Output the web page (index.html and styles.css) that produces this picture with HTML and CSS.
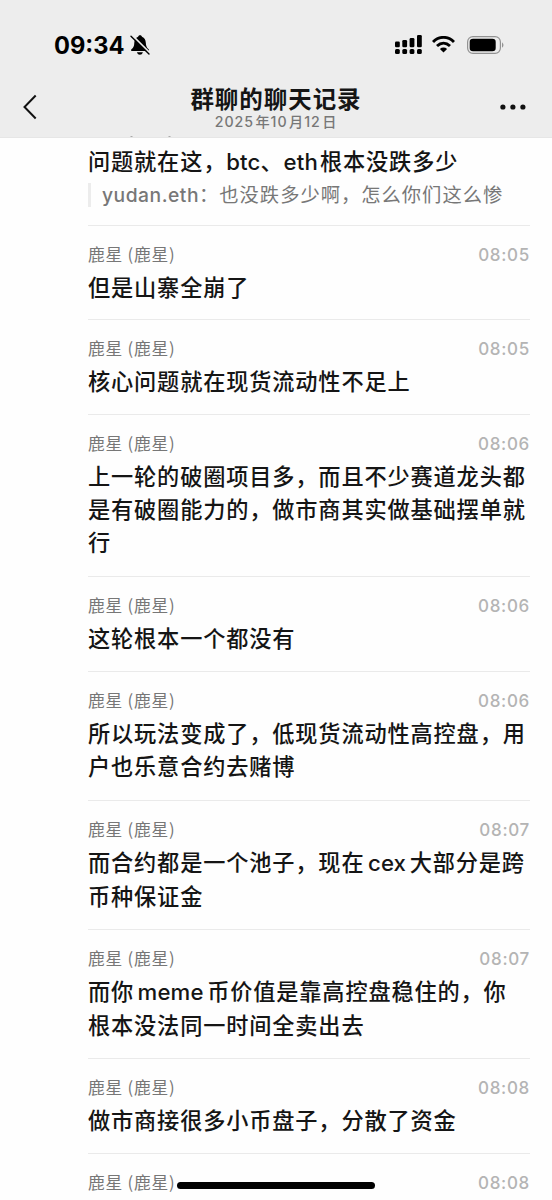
FILE: index.html
```html
<!DOCTYPE html>
<html lang="zh-CN">
<head>
<meta charset="utf-8">
<title>群聊的聊天记录</title>
<link rel="stylesheet" href="styles.css">
</head>
<body>
<div class="screen">
  <header class="top">
    <div class="status">
      <div class="status-left">
        <span class="clock">09:34</span>
        <svg class="bell" viewBox="0 0 20 20"><path d="M10 .3C8.900.3 8.300 1 8.100 1.800C5.400 2.700 4.400 4.800 4.300 7.700C4.200 11.200 3.500 12.400 1.700 14C.6 15 .7 16 2.100 16H18c1.300 0 1.500-1 .4-2C16.700 12.400 16 11.200 15.800 7.700C15.600 4.800 14.600 2.700 12 1.800C11.800 1 11.200.3 10 .3zM6.900 17.300h6c-.5 1.700-1.700 2.500-3 2.500s-2.500-.8-3-2.500z" fill="#000"/><path d="M2.300.4L20 18" stroke="#ededed" stroke-width="1.800"/><path d="M1 1.200L19 19" stroke="#000" stroke-width="1.400" stroke-linecap="round"/></svg>
      </div>
      <div class="status-right">
        <svg class="signal" viewBox="0 0 28 20"><g fill="#000"><rect x="0" y="6.500" width="4.800" height="5.700" rx="1.300"/><rect x="7.300" y="5" width="4.800" height="7.200" rx="1.300"/><rect x="14.600" y="3" width="4.800" height="9.200" rx="1.300"/><rect x="22" y="0" width="4.800" height="12.200" rx="1.300"/><rect x="0" y="14" width="4.800" height="5" rx="1.500"/><rect x="7.300" y="14" width="4.800" height="5" rx="1.500"/><rect x="14.600" y="14" width="4.800" height="5" rx="1.500"/><rect x="22" y="14" width="4.800" height="5" rx="1.500"/></g></svg>
        <svg class="wifi" viewBox="0 0 23 17"><g fill="none" stroke="#000" stroke-width="2.900"><path d="M1 6C7-.2 16-.2 22 6"/><path d="M5 10C9 6.200 14 6.200 18 10"/></g><path d="M11.500 16.500L7.900 12.900C10 11.100 13 11.100 15.100 12.900Z" fill="#000"/></svg>
        <svg class="battery" viewBox="0 0 37 18"><rect x=".6" y=".6" width="32.800" height="16.800" rx="5.300" fill="none" stroke="#929292" stroke-width="1.200"/><rect x="2.700" y="2.700" width="26" height="12.600" rx="3.300" fill="#000"/><path d="M35 6.200q3 2.800 0 5.600z" fill="#929292"/></svg>
      </div>
    </div>
    <div class="nav">
      <svg class="back" viewBox="0 0 14 26"><path d="M12.700 1.500L1.500 13L12.700 24.500" fill="none" stroke="#111" stroke-width="2"/></svg>
      <div class="heading">
        <h1 class="title">群聊的聊天记录</h1>
        <div class="date">2025<i class="cj">年</i>10<i class="cj">月</i>12<i class="cj">日</i></div>
      </div>
      <svg class="more" viewBox="0 0 26 6"><g fill="#111"><circle cx="2.900" cy="3" r="2.600"/><circle cx="12.900" cy="3" r="2.600"/><circle cx="22.900" cy="3" r="2.600"/></g></svg>
    </div>
    <svg class="peek" viewBox="0 0 42 2"><path d="M.5.5h2M38.500.5h2" stroke="#aaa"/></svg>
  </header>
  <main class="list">
    <section class="row first">
      <p class="text">问题就在这，<span class="la">btc</span>、<span class="la eth">eth</span>根本没跌多少</p>
      <div class="quote"><span class="quote-name">yudan.eth</span>：也没跌多少啊，怎么你们这么惨</div>
    </section>
    <section class="row">
      <div class="meta"><span class="name">鹿星 (鹿星)</span><time class="time">08:05</time></div>
      <p class="text">但是山寨全崩了</p>
    </section>
    <section class="row">
      <div class="meta"><span class="name">鹿星 (鹿星)</span><time class="time">08:05</time></div>
      <p class="text">核心问题就在现货流动性不足上</p>
    </section>
    <section class="row triple">
      <div class="meta"><span class="name">鹿星 (鹿星)</span><time class="time">08:06</time></div>
      <p class="text">上一轮的破圈项目多，而且不少赛道龙头都<br>是有破圈能力的，做市商其实做基础摆单就<br>行</p>
    </section>
    <section class="row">
      <div class="meta"><span class="name">鹿星 (鹿星)</span><time class="time">08:06</time></div>
      <p class="text">这轮根本一个都没有</p>
    </section>
    <section class="row double">
      <div class="meta"><span class="name">鹿星 (鹿星)</span><time class="time">08:06</time></div>
      <p class="text">所以玩法变成了，低现货流动性高控盘，用<br>户也乐意合约去赌博</p>
    </section>
    <section class="row double">
      <div class="meta"><span class="name">鹿星 (鹿星)</span><time class="time">08:07</time></div>
      <p class="text">而合约都是一个池子，现在<span class="la gap">cex</span>大部分是跨<br>币种保证金</p>
    </section>
    <section class="row double">
      <div class="meta"><span class="name">鹿星 (鹿星)</span><time class="time">08:07</time></div>
      <p class="text">而你<span class="la gap">meme</span>币价值是靠高控盘稳住的，你<br>根本没法同一时间全卖出去</p>
    </section>
    <section class="row">
      <div class="meta"><span class="name">鹿星 (鹿星)</span><time class="time">08:08</time></div>
      <p class="text">做市商接很多小币盘子，分散了资金</p>
    </section>
    <section class="row last">
      <div class="meta"><span class="name">鹿星 (鹿星)</span><time class="time">08:08</time></div>
    </section>
  </main>
  <div class="home-bar"></div>
</div>
</body>
</html>
```
FILE: styles.css
```css
* { box-sizing: border-box; }
body { margin: 0; background: #fff; }
.screen {
  position: relative;
  width: 552px;
  height: 1200px;
  overflow: hidden;
  background: #fefefe;
  color: #151515;
  font-family: "Noto Sans CJK SC", sans-serif;
}
.top {
  position: relative;
  height: 138px;
  background: #ededed;
  border-bottom: 1px solid #e6e6e6;
}
.status {
  display: flex;
  justify-content: space-between;
  height: 76px;
  padding: 35px 48px 0 54px;
}
.status-left, .status-right { display: flex; align-items: flex-start; }
.clock {
  width: 76px;
  font: 700 23.7px/21px "Inter", sans-serif;
  color: #000;
  white-space: nowrap;
}
.bell { width: 20px; height: 20px; }
.signal { width: 28px; height: 20px; margin-right: 9px; }
.wifi { width: 23px; height: 17px; margin: 1px 12px 0 0; }
.battery { width: 37px; height: 18px; margin-top: 1px; }
.nav {
  display: flex;
  justify-content: space-between;
  align-items: center;
  height: 61px;
  padding: 0 26px 0 23px;
}
.back { width: 14px; height: 26px; margin-right: 12px; }
.heading {
  display: flex;
  flex-direction: column;
  align-items: center;
  gap: 1px;
  padding-left: 3px;
}
.title {
  margin: 0;
  font-size: 23.5px;
  line-height: 29px;
  font-weight: 700;
  letter-spacing: .95px;
}
.date {
  height: 16px;
  font: 500 14.2px/16px "Inter", "Noto Sans CJK SC", sans-serif;
  letter-spacing: .95px;
  color: #777;
}
.cj { font-style: normal; margin-left: 1.5px; }
.more { width: 26px; height: 6px; }
.peek {
  position: absolute;
  left: 130px;
  bottom: -1px;
  width: 42px;
  height: 2px;
}
.list { padding: 0 22px 0 88px; }
.row {
  height: 94.800px;
  padding-top: 18px;
  border-bottom: 1px solid #eaeaea;
}
.first { height: 87.500px; padding-top: 6px; }
.double { height: 129px; }
.triple { height: 162px; }
.last { border: 0; }
.meta {
  display: flex;
  justify-content: space-between;
  height: 22px;
  line-height: 21px;
}
.name { font-size: 16.800px; letter-spacing: .75px; color: #777; }
.time {
  font-family: "Inter", sans-serif;
  font-size: 17px;
  font-weight: 500;
  line-height: 22px;
  letter-spacing: .7px;
  color: #b4b4b4;
}
.text {
  margin: 4px 0 0;
  font-size: 22.200px;
  line-height: 33px;
  font-weight: 500;
  letter-spacing: .85px;
  white-space: nowrap;
}
.first .text { margin: 0; }
.la { font-family: "Inter", sans-serif; font-weight: 500; letter-spacing: .15px; }
.eth { margin-right: 2px; }
.gap { margin: 0 3.500px; }
.quote {
  height: 24px;
  margin-top: 5px;
  padding-left: 11px;
  border-left: 3px solid #ececec;
  font-size: 19.300px;
  line-height: 22px;
  letter-spacing: 1px;
  color: #777;
  white-space: nowrap;
}
.quote-name { font-family: "Inter", sans-serif; font-weight: 500; letter-spacing: .5px; }
.home-bar {
  position: absolute;
  left: 177px;
  top: 1182px;
  width: 198px;
  height: 7px;
  border-radius: 4px;
  background: #000;
}
```
